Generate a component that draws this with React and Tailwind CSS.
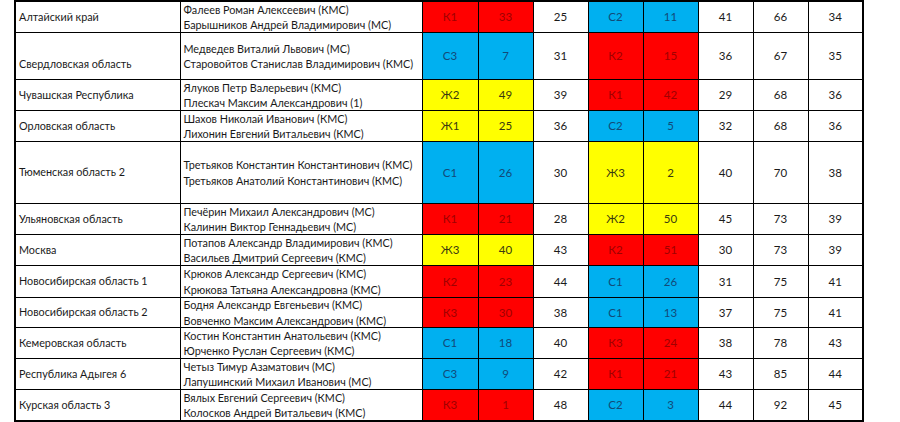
const rows = [
  { region: 'Алтайский край', names: ['Фалеев Роман Алексеевич (КМС)', 'Барышников Андрей Владимирович (МС)'], a: ['К1', 33], n1: 25, b: ['С2', 11], n2: 41, t: 66, p: 34, h: 'h-[30px]' },
  { region: 'Свердловская область', names: ['Медведев Виталий Львович (МС)', 'Старовойтов Станислав Владимирович (КМС)'], a: ['С3', 7], n1: 31, b: ['К2', 15], n2: 36, t: 67, p: 35, h: 'h-[46px]', low: true },
  { region: 'Чувашская Республика', names: ['Ялуков Петр Валерьевич (КМС)', 'Плескач Максим Александрович (1)'], a: ['Ж2', 49], n1: 39, b: ['К1', 42], n2: 29, t: 68, p: 36, h: 'h-[30px]' },
  { region: 'Орловская область', names: ['Шахов Николай Иванович (КМС)', 'Лихонин Евгений Витальевич (КМС)'], a: ['Ж1', 25], n1: 36, b: ['С2', 5], n2: 32, t: 68, p: 36, h: 'h-[30px]' },
  { region: 'Тюменская область 2', names: ['Третьяков Константин Константинович (КМС)', 'Третьяков Анатолий Константинович (КМС)'], a: ['С1', 26], n1: 30, b: ['Ж3', 2], n2: 40, t: 70, p: 38, h: 'h-[61px]' },
  { region: 'Ульяновская область', names: ['Печёрин Михаил Александрович (МС)', 'Калинин Виктор Геннадьевич (МС)'], a: ['К1', 21], n1: 28, b: ['Ж2', 50], n2: 45, t: 73, p: 39, h: 'h-[30px]' },
  { region: 'Москва', names: ['Потапов Александр Владимирович (КМС)', 'Васильев Дмитрий Сергеевич (КМС)'], a: ['Ж3', 40], n1: 43, b: ['К2', 51], n2: 30, t: 73, p: 39, h: 'h-[30px]' },
  { region: 'Новосибирская область 1', names: ['Крюков Александр Сергеевич (КМС)', 'Крюкова Татьяна Александровна (КМС)'], a: ['К2', 23], n1: 44, b: ['С1', 26], n2: 31, t: 75, p: 41, h: 'h-[31px]' },
  { region: 'Новосибирская область 2', names: ['Бодня Александр Евгеньевич (КМС)', 'Вовченко Максим Александрович (КМС)'], a: ['К3', 30], n1: 38, b: ['С1', 13], n2: 37, t: 75, p: 41, h: 'h-[29px]' },
  { region: 'Кемеровская область', names: ['Костин Константин Анатольевич (КМС)', 'Юрченко Руслан Сергеевич (КМС)'], a: ['С1', 18], n1: 40, b: ['К3', 24], n2: 38, t: 78, p: 43, h: 'h-[30px]' },
  { region: 'Республика Адыгея 6', names: ['Четыз Тимур Азаматович (МС)', 'Лапушинский Михаил Иванович (МС)'], a: ['С3', 9], n1: 42, b: ['К1', 21], n2: 43, t: 85, p: 44, h: 'h-[30px]' },
  { region: 'Курская область 3', names: ['Вялых Евгений Сергеевич (КМС)', 'Колосков Андрей Витальевич (КМС)'], a: ['К3', 1], n1: 48, b: ['С2', 3], n2: 44, t: 92, p: 45, h: 'h-[30px]' },
];

// colour by the first letter of the group code
function tone(code) {
  if (code.startsWith('К')) return 'bg-[#ff0000] text-[#a00000]';
  if (code.startsWith('С')) return 'bg-[#00b0f0] text-[#124a78]';
  return 'bg-[#ffff00] text-[#3a3a10]';
}

const cell = 'border border-black text-center align-middle p-0 text-[11.5px]';

export default function App() {
  return (
    <div className="w-[900px] h-[422px] bg-white pl-[14px] overflow-hidden" style={{ fontFamily: 'Lato, "Open Sans", sans-serif' }}>
      <table className="w-[850px] border-collapse table-fixed border-2 border-black text-[10.8px] text-[#1a1a1a]">
        <colgroup>
          <col className="w-[165px]" />
          <col className="w-[242px]" />
          <col className="w-[56px]" />
          <col className="w-[55px]" />
          <col className="w-[55px]" />
          <col className="w-[55px]" />
          <col className="w-[55px]" />
          <col className="w-[55px]" />
          <col className="w-[55px]" />
          <col className="w-[55px]" />
        </colgroup>
        <tbody>
          {rows.map(r => (
            <tr key={r.region}>
              <td className={`border border-black align-middle p-0 pl-[3px] whitespace-nowrap ${r.low ? 'pt-[16px]' : ''}`}>{r.region}</td>
              <td className="border border-black p-0 pl-[3px]">
                <div className={`${r.h} flex flex-col justify-center leading-[15.5px] whitespace-nowrap`}>
                  <div>{r.names[0]}</div>
                  <div>{r.names[1]}</div>
                </div>
              </td>
              <td className={`${cell} ${tone(r.a[0])}`}>{r.a[0]}</td>
              <td className={`${cell} ${tone(r.a[0])}`}>{r.a[1]}</td>
              <td className={cell}>{r.n1}</td>
              <td className={`${cell} ${tone(r.b[0])}`}>{r.b[0]}</td>
              <td className={`${cell} ${tone(r.b[0])}`}>{r.b[1]}</td>
              <td className={cell}>{r.n2}</td>
              <td className={cell}>{r.t}</td>
              <td className={cell}>{r.p}</td>
            </tr>
          ))}
        </tbody>
      </table>
    </div>
  );
}
